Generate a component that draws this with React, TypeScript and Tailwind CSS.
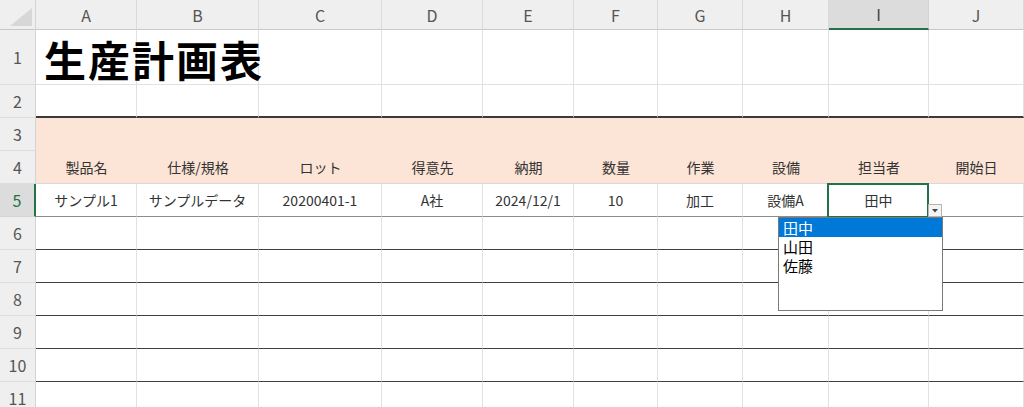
import React from 'react';

type Col = { label: string; width: string };

const cols: Col[] = [
  { label: 'A', width: 'w-[101px]' },
  { label: 'B', width: 'w-[122px]' },
  { label: 'C', width: 'w-[123px]' },
  { label: 'D', width: 'w-[101px]' },
  { label: 'E', width: 'w-[91px]' },
  { label: 'F', width: 'w-[84px]' },
  { label: 'G', width: 'w-[85px]' },
  { label: 'H', width: 'w-[86px]' },
  { label: 'I', width: 'w-[100px]' },
  { label: 'J', width: 'flex-1' },
];

const headers = ['製品名', '仕様/規格', 'ロット', '得意先', '納期', '数量', '作業', '設備', '担当者', '開始日'];
const sample = ['サンプル1', 'サンプルデータ', '20200401-1', 'A社', '2024/12/1', '10', '加工', '設備A', '田中', ''];

interface RowDef {
  num: number;
  height: string;
  line: string;
  fill?: boolean;
  values?: string[];
}

const rows: RowDef[] = [
  { num: 1, height: 'h-[55px]', line: 'border-b border-b-[#e1e1e1]' },
  { num: 2, height: 'h-[33px]', line: 'border-b-2 border-b-[#3a3a3a]' },
  { num: 3, height: 'h-[33px]', line: '', fill: true },
  { num: 4, height: 'h-[33px]', line: 'border-b border-b-[#d9d9d9]', fill: true, values: headers },
  { num: 5, height: 'h-[33px]', line: 'border-b border-b-[#8c8c8c]', values: sample },
  { num: 6, height: 'h-[33px]', line: 'border-b border-b-[#404040]' },
  { num: 7, height: 'h-[33px]', line: 'border-b border-b-[#404040]' },
  { num: 8, height: 'h-[33px]', line: 'border-b border-b-[#404040]' },
  { num: 9, height: 'h-[33px]', line: 'border-b border-b-[#404040]' },
  { num: 10, height: 'h-[33px]', line: 'border-b border-b-[#404040]' },
  { num: 11, height: 'h-[33px]', line: '' },
];

const font = { fontFamily: '"Noto Sans CJK JP", "Noto Sans", sans-serif' };

const Corner = () => (
  <div className="w-[36px] h-full shrink-0 bg-[#efefef] border-r border-[#d4d4d4] border-b border-b-[#c8c8c8] flex items-end justify-end p-[3px]">
    <svg width="22" height="18" viewBox="0 0 22 18">
      <polygon points="22,0 22,18 0,18" fill="#d7d7d7" />
    </svg>
  </div>
);

const ColumnHeader = () => (
  <div className="flex h-[30px]">
    <Corner />
    {cols.map((c) =>
      c.label === 'I' ? (
        <div
          key={c.label}
          className={`${c.width} shrink-0 bg-[#dcdcdc] border-r border-[#d4d4d4] border-b-2 border-b-[#217346] flex items-center justify-center text-[16px] text-[#444]`}
        >
          {c.label}
        </div>
      ) : (
        <div
          key={c.label}
          className={`${c.width} shrink-0 bg-[#efefef] border-r border-[#dadada] border-b border-b-[#c8c8c8] flex items-center justify-center text-[16px] text-[#555]`}
        >
          {c.label}
        </div>
      )
    )}
  </div>
);

const SheetRow = ({ row }: { row: RowDef }) => {
  const selected = row.num === 5;
  return (
    <div className={`flex ${row.height}`}>
      <div
        className={
          selected
            ? 'w-[36px] shrink-0 bg-[#dcdcdc] border-r-2 border-[#217346] border-b border-b-[#d4d4d4] flex items-center justify-center text-[16px] text-[#217346]'
            : 'w-[36px] shrink-0 bg-[#efefef] border-r border-[#d4d4d4] border-b border-b-[#dcdcdc] flex items-center justify-center text-[16px] text-[#555]'
        }
      >
        {row.num}
      </div>
      {cols.map((c, i) => {
        const isSel = selected && c.label === 'I';
        return (
          <div
            key={c.label}
            className={`${c.width} shrink-0 relative flex items-center justify-center text-[14px] text-[#333] whitespace-nowrap ${row.line} ${
              row.fill ? 'bg-[#fce4d6]' : 'border-r border-r-[#e1e1e1] bg-white'
            }`}
          >
            {row.num === 1 && i === 0 && (
              <span className="absolute z-10 left-[8px] top-[5px] text-[42px] font-bold text-black tracking-[2px] leading-[48px]">
                生産計画表
              </span>
            )}
            {row.values ? row.values[i] : ''}
            {isSel && <div className="absolute z-10 -left-[2px] -top-[1px] -right-[1px] -bottom-[2px] border-2 border-[#217346]" />}
          </div>
        );
      })}
    </div>
  );
};

export default function App() {
  return (
    <div className="relative w-[1024px] h-[407px] overflow-hidden bg-white select-none" style={font}>
      <ColumnHeader />
      {rows.map((r) => (
        <SheetRow key={r.num} row={r} />
      ))}

      {/* data validation dropdown */}
      <div className="absolute z-20 left-[928px] top-[204px] w-[14px] h-[13px] bg-[#f4f4f4] border border-[#b5b5b5] flex items-center justify-center">
        <svg width="6" height="4" viewBox="0 0 6 4">
          <polygon points="0,0 6,0 3,3.5" fill="#444" />
        </svg>
      </div>
      <div className="absolute z-20 left-[778px] top-[217px] w-[165px] h-[94px] bg-white border border-[#7a7a7a] text-[15px] text-black leading-[19px]">
        <div className="bg-[#0078d7] text-white pl-[4px] h-[19px]">田中</div>
        <div className="pl-[4px]">山田</div>
        <div className="pl-[4px]">佐藤</div>
      </div>
    </div>
  );
}
